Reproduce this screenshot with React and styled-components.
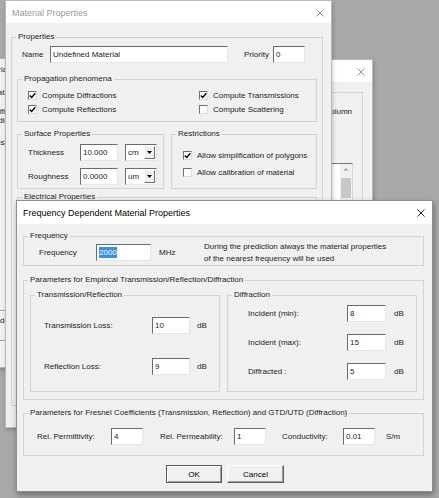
import styled, { createGlobalStyle } from 'styled-components'

const GlobalStyle = createGlobalStyle`
    html, body {
        margin: 0;
        padding: 0;
        background: #a8a8a8;
    }
    body {
        font-family: "Liberation Sans", Arial, sans-serif;
        font-size: 8px;
        color: #1c1c1c;
    }
    * {
        box-sizing: border-box;
    }
`

function CloseIcon({ color }) {
    return (
        <svg width='8' height='8' viewBox='0 0 8 8'>
            <path d='M0.5 0.5 L7.5 7.5 M7.5 0.5 L0.5 7.5' stroke={color} strokeWidth='0.9' fill='none' />
        </svg>
    )
}

function CheckBox({ checked, children }) {
    return (
        <CheckRow>
            <Box>
                {checked && (
                    <svg width='7' height='7' viewBox='0 0 7 7'>
                        <path d='M0.8 3.4 L2.7 5.4 L6.3 1.2' stroke='#000' strokeWidth='1.4' fill='none' />
                    </svg>
                )}
            </Box>
            <span>{children}</span>
        </CheckRow>
    )
}

function Combo({ value }) {
    return (
        <ComboBox>
            <ComboText>{value}</ComboText>
            <ComboButton>
                <svg width='5' height='3' viewBox='0 0 5 3'>
                    <path d='M0 0 H5 L2.5 3 Z' fill='#000' />
                </svg>
            </ComboButton>
        </ComboBox>
    )
}

function App() {
    return (
        <>
            <GlobalStyle />
            <Desktop>
                {/* window furthest back, only its right edge shows */}
                <Window $x={-120} $y={58} $w={128} $h={310}>
                    <LeftBody>
                        <Tail $mt={6}>Material</Tail>
                        <Tail $mt={13}>Data</Tail>
                        <Tail $mt={9}>Specific</Tail>
                        <Tail $mt={-1}>Handle</Tail>
                        <Tail $mt={12}>Push</Tail>
                        <Rule $mt={162} />
                        <Tail $mt={4}>Undo</Tail>
                        <Rule $mt={14} />
                    </LeftBody>
                </Window>

                <Window $x={100} $y={59} $w={273} $h={300}>
                    <TitleBar>
                        <span>Display Settings</span>
                        <CloseIcon color='#8a8a8a' />
                    </TitleBar>
                    <Body $pad='5px 9px 0 8px'>
                        <Group>
                            <Legend>Display</Legend>
                            <GroupContent $pad='10px 10px 0 0'>
                                <RightText>column</RightText>
                                <ListBox>
                                    <ScrollBar>
                                        <ScrollArrow>^</ScrollArrow>
                                        <ScrollThumb />
                                    </ScrollBar>
                                </ListBox>
                            </GroupContent>
                        </Group>
                    </Body>
                </Window>

                <Window $x={5} $y={0} $w={327} $h={428}>
                    <TitleBar>
                        <span>Material Properties</span>
                        <CloseIcon color='#8a8a8a' />
                    </TitleBar>
                    <Body $pad='9px 8px 0 5px'>
                        <Group $h={374}>
                            <Legend>Properties</Legend>
                            <GroupContent $pad='4px 5px 0 5px'>
                                <FieldRow $ml={5}>
                                    <Label $w={28}>Name</Label>
                                    <Field $w={178}>Undefined Material</Field>
                                    <Label $w={29} $ml={16}>Priority</Label>
                                    <Field $w={32}>0</Field>
                                </FieldRow>

                                <Group $mt={11}>
                                    <Legend>Propagation phenomena</Legend>
                                    <CheckGrid>
                                        <CheckBox checked>Compute Diffractions</CheckBox>
                                        <CheckBox checked>Compute Transmissions</CheckBox>
                                        <CheckBox checked>Compute Reflections</CheckBox>
                                        <CheckBox>Compute Scattering</CheckBox>
                                    </CheckGrid>
                                </Group>

                                <GroupPair>
                                    <Group $w={147}>
                                        <Legend>Surface Properties</Legend>
                                        <GroupContent $pad='5px 6px 3px 10px' $gap={7}>
                                            <FieldRow>
                                                <Label $w={52}>Thickness</Label>
                                                <Field $w={38}>10.000</Field>
                                                <Spacer $w={7} />
                                                <Combo value='cm' />
                                            </FieldRow>
                                            <FieldRow>
                                                <Label $w={52}>Roughness</Label>
                                                <Field $w={38}>0.0000</Field>
                                                <Spacer $w={7} />
                                                <Combo value='um' />
                                            </FieldRow>
                                        </GroupContent>
                                    </Group>
                                    <Group $grow>
                                        <Legend>Restrictions</Legend>
                                        <GroupContent $pad='9px 6px 0 11px' $gap={3}>
                                            <CheckBox checked>Allow simplification of polygons</CheckBox>
                                            <CheckBox>Allow calibration of material</CheckBox>
                                        </GroupContent>
                                    </Group>
                                </GroupPair>

                                <Group $mt={3} $h={170}>
                                    <Legend>Electrical Properties</Legend>
                                </Group>
                            </GroupContent>
                        </Group>
                    </Body>
                </Window>

                <Window $x={16} $y={200} $w={417} $h={292} $active>
                    <TitleBar $active $h={23}>
                        <span>Frequency Dependent Material Properties</span>
                        <CloseIcon color='#111' />
                    </TitleBar>
                    <Body $pad='7px 8px 8px 6px'>
                        <Group>
                            <Legend>Frequency</Legend>
                            <GroupContent $pad='3px 0 4px 15px'>
                                <FieldRow>
                                    <Label $w={57}>Frequency</Label>
                                    <Field $w={55}>
                                        <Selected>2000</Selected>
                                    </Field>
                                    <Label $w={45} $ml={8}>MHz</Label>
                                    <Note>
                                        During the prediction always the material properties
                                        <br />
                                        of the nearest frequency will be used
                                    </Note>
                                </FieldRow>
                            </GroupContent>
                        </Group>

                        <Group $mt={9}>
                            <Legend>Parameters for Empirical Transmission/Reflection/Diffraction</Legend>
                            <SubGrid>
                                <Group>
                                    <Legend>Transmission/Reflection</Legend>
                                    <GroupContent $pad='17px 0 16px 13px' $gap={24}>
                                        <FieldRow>
                                            <Label $w={108}>Transmission Loss:</Label>
                                            <Field $w={38}>10</Field>
                                            <Label $ml={7}>dB</Label>
                                        </FieldRow>
                                        <FieldRow>
                                            <Label $w={108}>Reflection Loss:</Label>
                                            <Field $w={38}>9</Field>
                                            <Label $ml={7}>dB</Label>
                                        </FieldRow>
                                    </GroupContent>
                                </Group>
                                <Group>
                                    <Legend>Diffraction</Legend>
                                    <GroupContent $pad='5px 0 11px 20px' $gap={12}>
                                        <FieldRow>
                                            <Label $w={99}>Incident (min):</Label>
                                            <Field $w={39}>8</Field>
                                            <Label $ml={8}>dB</Label>
                                        </FieldRow>
                                        <FieldRow>
                                            <Label $w={99}>Incident (max):</Label>
                                            <Field $w={39}>15</Field>
                                            <Label $ml={8}>dB</Label>
                                        </FieldRow>
                                        <FieldRow>
                                            <Label $w={99}>Diffracted :</Label>
                                            <Field $w={39}>5</Field>
                                            <Label $ml={8}>dB</Label>
                                        </FieldRow>
                                    </GroupContent>
                                </Group>
                            </SubGrid>
                        </Group>

                        <Group $mt={8}>
                            <Legend>
                                Parameters for Fresnel Coefficients (Transmission, Reflection) and GTD/UTD (Diffraction)
                            </Legend>
                            <GroupContent $pad='10px 0 10px 13px'>
                                <FieldRow>
                                    <Label $w={74}>Rel. Permittivity:</Label>
                                    <Field $w={32}>4</Field>
                                    <Label $w={74} $ml={17}>Rel. Permeability:</Label>
                                    <Field $w={32}>1</Field>
                                    <Label $w={61} $ml={16}>Conductivity:</Label>
                                    <Field $w={32}>0.01</Field>
                                    <Label $ml={11}>S/m</Label>
                                </FieldRow>
                            </GroupContent>
                        </Group>

                        <ButtonRow>
                            <Button $w={56} $default>OK</Button>
                            <Button $w={57}>Cancel</Button>
                        </ButtonRow>
                    </Body>
                </Window>
            </Desktop>
        </>
    )
}

const Desktop = styled.div`
    position: relative;
    width: 439px;
    height: 498px;
    overflow: hidden;
    background: #a8a8a8;
`

const Window = styled.div`
    position: absolute;
    left: ${(p) => p.$x}px;
    top: ${(p) => p.$y}px;
    width: ${(p) => p.$w}px;
    height: ${(p) => p.$h}px;
    display: flex;
    flex-direction: column;
    overflow: hidden;
    background: #f0f0f0;
    border: 1px solid ${(p) => (p.$active ? '#8f8f8f' : '#b9b9b9')};
    box-shadow: ${(p) => (p.$active ? '1px 3px 6px rgba(0, 0, 0, 0.35)' : '1px 2px 4px rgba(0, 0, 0, 0.2)')};
`

const TitleBar = styled.div`
    flex: none;
    height: ${(p) => p.$h || 22}px;
    display: flex;
    align-items: center;
    justify-content: space-between;
    padding: 1px 7px 0 6px;
    background: #fff;
    font-size: 9px;
    color: ${(p) => (p.$active ? '#000' : '#9a9a9a')};
    white-space: nowrap;
`

const Body = styled.div`
    flex: 1;
    display: flex;
    flex-direction: column;
    padding: ${(p) => p.$pad};
`

const LeftBody = styled.div`
    display: flex;
    flex-direction: column;
    align-items: flex-end;
    margin-right: -2px;
`

const Tail = styled.div`
    margin-top: ${(p) => p.$mt}px;
    line-height: 10px;
`

const Rule = styled.div`
    align-self: stretch;
    margin-top: ${(p) => p.$mt}px;
    border-top: 1px solid #a0a0a0;
    border-bottom: 1px solid #fff;
`

const Group = styled.fieldset`
    margin: ${(p) => p.$mt || 0}px 0 0 0;
    padding: 0;
    min-width: 0;
    ${(p) => (p.$w ? `width: ${p.$w}px; flex: none;` : '')}
    ${(p) => (p.$grow ? 'flex: 1;' : '')}
    ${(p) => (p.$h ? `height: ${p.$h}px;` : '')}
    border: 1px solid #d2d2d2;
`

const Legend = styled.legend`
    margin-left: 4px;
    padding: 0 2px;
    line-height: 10px;
    font-size: 8px;
    white-space: nowrap;
`

const GroupContent = styled.div`
    display: flex;
    flex-direction: column;
    gap: ${(p) => p.$gap || 0}px;
    padding: ${(p) => p.$pad};
`

const GroupPair = styled.div`
    display: flex;
    gap: 7px;
    margin-top: 7px;
`

const SubGrid = styled.div`
    display: grid;
    grid-template-columns: 1fr 1fr;
    gap: 7px;
    padding: 5px 6px 7px 6px;
`

const CheckGrid = styled.div`
    display: grid;
    grid-template-columns: 171px 1fr;
    grid-auto-rows: 14px;
    padding: 4px 10px 5px 10px;
`

const CheckRow = styled.label`
    display: flex;
    align-items: center;
    gap: 5px;
    height: 14px;
    white-space: nowrap;
`

const Box = styled.span`
    flex: none;
    width: 9px;
    height: 9px;
    display: flex;
    align-items: center;
    justify-content: center;
    background: #fff;
    border: 1px solid;
    border-color: #6f6f6f #dcdcdc #dcdcdc #6f6f6f;
`

const FieldRow = styled.div`
    display: flex;
    align-items: center;
    height: 17px;
    margin-left: ${(p) => p.$ml || 0}px;
`

const Label = styled.span`
    flex: none;
    ${(p) => (p.$w ? `width: ${p.$w}px;` : '')}
    margin-left: ${(p) => p.$ml || 0}px;
    white-space: nowrap;
`

const Spacer = styled.span`
    flex: none;
    width: ${(p) => p.$w}px;
`

const Field = styled.div`
    flex: none;
    width: ${(p) => p.$w}px;
    height: 17px;
    padding: 2px 0 0 2px;
    line-height: 11px;
    background: #fff;
    border: 1px solid;
    border-color: #6b6b6b #e6e6e6 #e6e6e6 #6b6b6b;
    white-space: nowrap;
    overflow: hidden;
`

const Selected = styled.span`
    background: #3390f0;
    color: #fff;
    padding: 1px 0;
`

const Note = styled.div`
    line-height: 12px;
    white-space: nowrap;
`

const ComboBox = styled.div`
    flex: none;
    width: 32px;
    height: 17px;
    display: flex;
    background: #fff;
    border: 1px solid;
    border-color: #6b6b6b #e6e6e6 #e6e6e6 #6b6b6b;
`

const ComboText = styled.span`
    flex: 1;
    padding: 2px 0 0 2px;
    line-height: 11px;
`

const ComboButton = styled.span`
    flex: none;
    width: 11px;
    margin: 1px;
    display: flex;
    align-items: center;
    justify-content: center;
    background: #f0f0f0;
    border: 1px solid;
    border-color: #fff #6f6f6f #6f6f6f #fff;
`

const RightText = styled.div`
    align-self: flex-end;
    line-height: 10px;
    white-space: nowrap;
`

const ListBox = styled.div`
    align-self: flex-end;
    width: 150px;
    height: 100px;
    margin-top: 46px;
    margin-right: -1px;
    display: flex;
    justify-content: flex-end;
    background: #fff;
    border-top: 1px solid #7a7a7a;
    border-right: 1px solid #d8d8d8;
`

const ScrollBar = styled.div`
    width: 12px;
    display: flex;
    flex-direction: column;
    align-items: center;
    background: #f0f0f0;
`

const ScrollArrow = styled.span`
    height: 12px;
    line-height: 13px;
    font-size: 8px;
    color: #444;
`

const ScrollThumb = styled.span`
    width: 10px;
    height: 20px;
    margin-top: 2px;
    background: #c8c8c8;
`

const ButtonRow = styled.div`
    display: flex;
    justify-content: center;
    gap: 5px;
    margin-top: 9px;
    padding-left: 3px;
`

const Button = styled.button`
    width: ${(p) => p.$w}px;
    height: 18px;
    padding: 0;
    font-family: inherit;
    font-size: 8px;
    color: #000;
    background: #f0f0f0;
    border: 1px solid;
    border-color: ${(p) => (p.$default ? '#5a5a5a' : '#fff #5f5f5f #5f5f5f #fff')};
    box-shadow: ${(p) => (p.$default ? 'inset 1px 1px 0 #fff, inset -1px -1px 0 #a0a0a0' : 'inset -1px -1px 0 #a0a0a0')};
`

export default App
